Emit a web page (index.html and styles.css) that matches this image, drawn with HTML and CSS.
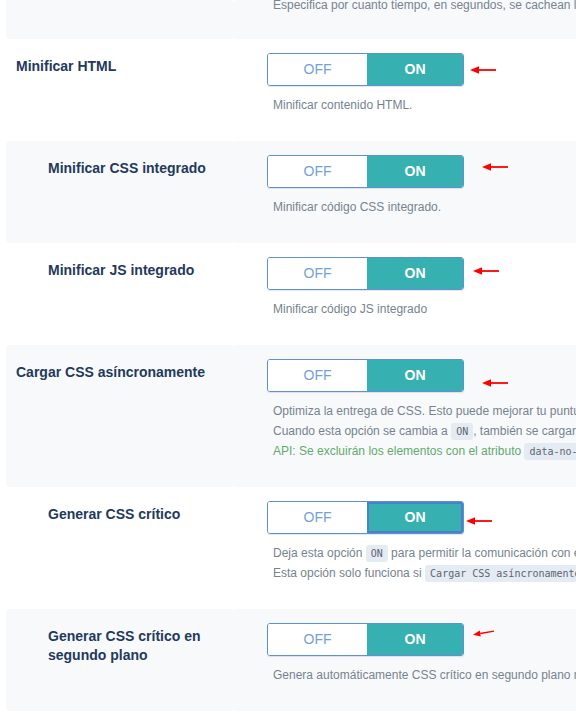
FILE: index.html
```html
<!DOCTYPE html>
<html lang="es">
<head>
<meta charset="utf-8">
<title>Ajustes</title>
<link rel="stylesheet" href="styles.css">
</head>
<body>
<div class="page">

  <div class="row gray first">
    <div class="th"></div>
    <div class="td">
      <div class="desc">Especifica por cuanto tiempo, en segundos, se cachean los archivos públicos.</div>
    </div>
  </div>

  <div class="row">
    <div class="th">Minificar HTML</div>
    <div class="td">
      <div class="toggle"><span class="off">OFF</span><span class="on">ON</span></div>
      <svg class="arrow a1" viewBox="0 0 28 10" width="28" height="10"><path d="M10 4.1 H27 V5.9 H10 Z" fill="#ff0000"/><path d="M1 5 L10 1.3 L10 8.7 Z" fill="#ff0000"/></svg>
      <div class="desc">Minificar contenido HTML.</div>
    </div>
  </div>

  <div class="row gray">
    <div class="th sub">Minificar CSS integrado</div>
    <div class="td">
      <div class="toggle"><span class="off">OFF</span><span class="on">ON</span></div>
      <svg class="arrow a2" viewBox="0 0 28 10" width="28" height="10"><path d="M10 4.1 H27 V5.9 H10 Z" fill="#ff0000"/><path d="M1 5 L10 1.3 L10 8.7 Z" fill="#ff0000"/></svg>
      <div class="desc">Minificar código CSS integrado.</div>
    </div>
  </div>

  <div class="row">
    <div class="th sub">Minificar JS integrado</div>
    <div class="td">
      <div class="toggle"><span class="off">OFF</span><span class="on">ON</span></div>
      <svg class="arrow a3" viewBox="0 0 28 10" width="28" height="10"><path d="M10 4.1 H27 V5.9 H10 Z" fill="#ff0000"/><path d="M1 5 L10 1.3 L10 8.7 Z" fill="#ff0000"/></svg>
      <div class="desc">Minificar código JS integrado</div>
    </div>
  </div>

  <div class="row gray">
    <div class="th">Cargar CSS asíncronamente</div>
    <div class="td">
      <div class="toggle"><span class="off">OFF</span><span class="on">ON</span></div>
      <svg class="arrow a4" viewBox="0 0 28 10" width="28" height="10"><path d="M10 4.1 H27 V5.9 H10 Z" fill="#ff0000"/><path d="M1 5 L10 1.3 L10 8.7 Z" fill="#ff0000"/></svg>
      <div class="desc">
        <div class="line">Optimiza la entrega de CSS. Esto puede mejorar tu puntuación de velocidad en servicios como Pingdom, GTmetrix y PageSpeed.</div>
        <div class="line">Cuando esta opción se cambia a <code>ON</code>, también se cargará automáticamente el CSS crítico.</div>
        <div class="line api">API: Se excluirán los elementos con el atributo <code>data-no-async="1"</code></div>
      </div>
    </div>
  </div>

  <div class="row">
    <div class="th sub">Generar CSS crítico</div>
    <div class="td">
      <div class="toggle"><span class="off">OFF</span><span class="on focus">ON</span></div>
      <svg class="arrow a5" viewBox="0 0 28 10" width="28" height="10"><path d="M10 4.1 H27 V5.9 H10 Z" fill="#ff0000"/><path d="M1 5 L10 1.3 L10 8.7 Z" fill="#ff0000"/></svg>
      <div class="desc">
        <div class="line">Deja esta opción <code>ON</code> para permitir la comunicación con el servidor de QUIC.cloud CCSS.</div>
        <div class="line">Esta opción solo funciona si <code>Cargar CSS asíncronamente</code> está activado.</div>
      </div>
    </div>
  </div>

  <div class="row gray">
    <div class="th sub">Generar CSS crítico en segundo plano</div>
    <div class="td">
      <div class="toggle"><span class="off">OFF</span><span class="on">ON</span></div>
      <svg class="arrow a6" viewBox="0 0 28 10" width="28" height="10"><path d="M10 4.1 H27 V5.9 H10 Z" fill="#ff0000"/><path d="M1 5 L10 1.3 L10 8.7 Z" fill="#ff0000"/></svg>
      <div class="desc">Genera automáticamente CSS crítico en segundo plano mediante una cola basada en cron.</div>
    </div>
  </div>

  <div class="row">
    <div class="th"></div>
    <div class="td"></div>
  </div>

</div>
</body>
</html>
```

FILE: styles.css
```css
html, body {
  margin: 0;
  padding: 0;
  background: #ffffff;
  overflow: hidden;
}

body {
  font-family: "Liberation Sans", Arial, sans-serif;
  color: #243a5e;
}

.page {
  width: 1100px;
  padding-left: 6px;
}

.row {
  display: flex;
}

.th {
  width: 208px;
  flex: none;
  padding: 18px 10px 10px 10px;
  font-size: 14px;
  line-height: 19px;
  font-weight: bold;
  color: #23395c;
  border-radius: 3px;
}

.th.sub {
  padding-left: 42px;
  width: 176px;
}

.td {
  position: relative;
  flex: 1;
  padding: 14px 0 26px 33px;
  border-radius: 3px;
}

.gray .th,
.gray .td {
  background: #f8f9fb;
}

.first .td {
  padding-top: 0;
  padding-bottom: 24px;
}

.first .desc {
  margin-top: -5px;
}

.toggle {
  display: flex;
  width: 195px;
  height: 31px;
  border: 1px solid #5f90d2;
  border-radius: 3px;
  overflow: hidden;
  font-size: 14px;
  line-height: 31px;
  box-shadow: 0 1px 1px rgba(60, 90, 140, 0.15);
}

.toggle .off {
  width: 99px;
  text-align: center;
  color: #74a0d8;
  background: #ffffff;
}

.toggle .on {
  flex: 1;
  text-align: center;
  color: #ffffff;
  font-weight: bold;
  background: #36b0b0;
}

.toggle .on.focus {
  box-shadow: inset 0 0 0 2px #4a82c8;
}

.desc {
  margin-top: 9px;
  padding-left: 6px;
  font-size: 12px;
  line-height: 20px;
  color: #76838f;
  white-space: nowrap;
}

.desc .line {
  height: 20px;
}

.desc .api {
  color: #5fab6e;
}

code {
  font-family: "DejaVu Sans Mono", "Liberation Mono", monospace;
  font-size: 10px;
  line-height: 12px;
  color: #5c6670;
  background: #e4ebf3;
  padding: 3px 5px;
  border-radius: 3px;
}

.arrow {
  position: absolute;
}

.a1 { left: 235px; top: 26px; }
.a2 { left: 247px; top: 21px; }
.a3 { left: 238px; top: 23px; }
.a4 { left: 247px; top: 33px; }
.a5 { left: 231px; top: 29px; }
.a6 { left: 238px; top: 19px; width: 23px; transform: rotate(-10deg); }
```
